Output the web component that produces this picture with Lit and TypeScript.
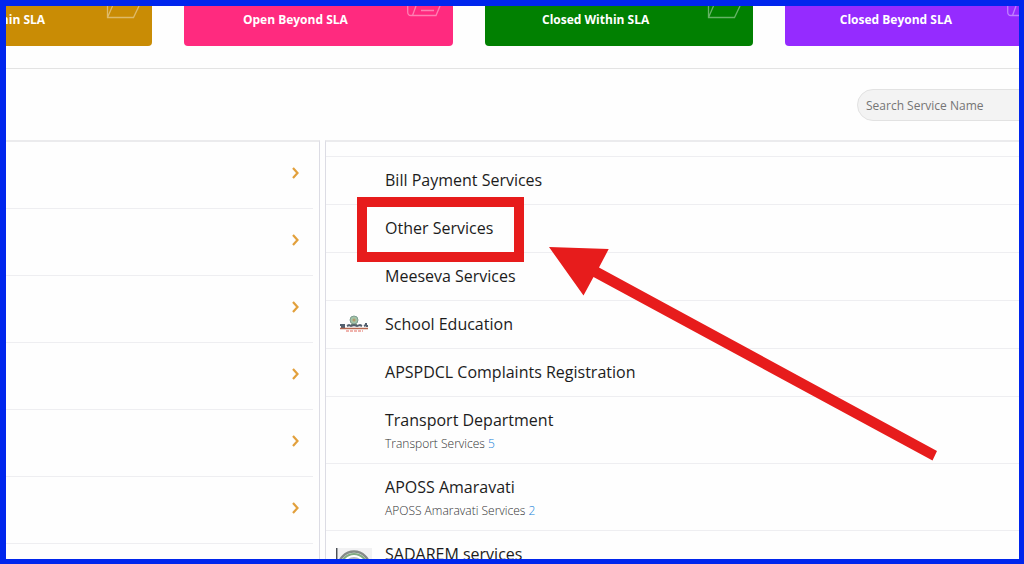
import { LitElement, html, css, svg, nothing } from "lit";
import { customElement } from "lit/decorators.js";
import { classMap } from "lit/directives/class-map.js";

interface Status {
  label: string;
  tone: string;
  icon: "open" | "lined";
}

interface Service {
  title: string;
  detail?: string;
  count?: number;
  logo?: "school" | "seal";
  tall?: boolean;
}

const STATUSES: Status[] = [
  { label: "Open Within SLA", tone: "amber", icon: "open" },
  { label: "Open Beyond SLA", tone: "pink", icon: "lined" },
  { label: "Closed Within SLA", tone: "green", icon: "open" },
  { label: "Closed Beyond SLA", tone: "violet", icon: "lined" },
];

const SERVICES: Service[] = [
  { title: "Bill Payment Services" },
  { title: "Other Services" },
  { title: "Meeseva Services" },
  { title: "School Education", logo: "school" },
  { title: "APSPDCL Complaints Registration" },
  { title: "Transport Department", detail: "Transport Services", count: 5, tall: true },
  { title: "APOSS Amaravati", detail: "APOSS Amaravati Services", count: 2, tall: true },
  { title: "SADAREM services", logo: "seal", tall: true },
];

const DEPARTMENTS = [1, 2, 3, 4, 5, 6, 7];

const folderOpen = svg`<path d="M1.5 0V11.5H27.5L33 0M1.5 11.5L6.5 0" />`;
const folderLined = svg`<path d="M.7 0V6Q.7 9.5 4 9.5H29L33 0M5.500 9.500L9 0M14 4.500H27" />`;

const schoolLogo = html`<svg class="logo" width="36" height="20" viewBox="0 0 36 20" aria-hidden="true">
  <circle cx="18" cy="6" r="4" fill="#a3c3a6" stroke="#7f9e93" />
  <circle cx="18" cy="6" r="1.500" fill="#b59a69" />
  <path d="M15 10h6v2h-6z" fill="#77936f" />
  <path d="M4 11h5M5 13h4M11 12l2-1 2 1 3-1 3 1 3-1 2 1M28 12l2-1M29 10h2M30 12h2" stroke="#53606f" stroke-width="2" fill="none" />
  <path d="M4 14.500H32" stroke="#b5674f" stroke-width="1.500" />
  <path d="M10 17H27" stroke="#f0b3ad" stroke-width="2" stroke-dasharray="3 1" />
</svg>`;

const sealLogo = html`<svg class="logo" width="36" height="36" viewBox="0 0 36 36" aria-hidden="true">
  <rect width="36" height="36" fill="#f1f1f2" />
  <path d="M.7 0V36" stroke="#4b4f55" stroke-width="1.500" />
  <circle cx="18" cy="19" r="15.500" fill="#fff" stroke="#858b88" stroke-width="2.500" />
  <circle cx="18" cy="19" r="13" fill="none" stroke="#82aa83" stroke-width="2" />
  <circle cx="18" cy="19" r="9" fill="#dddde2" stroke="#b5b7c0" stroke-width="2" />
  <circle cx="18" cy="14" r="3" fill="#884f57" />
  <path d="M14 20h8v8h-8z" fill="#727c69" />
</svg>`;

@customElement("app-root")
export class AppRoot extends LitElement {
  static styles = css`
    :host {
      display: block;
      font-family: "Open Sans", "Noto Sans", sans-serif;
      color: #1c1c1c;
    }
    * {
      box-sizing: border-box;
    }
    .frame {
      position: relative;
      height: 100vh;
      overflow: hidden;
      display: flex;
      flex-direction: column;
      border: 5px solid #0026ed;
      border-top-width: 6px;
      border-left-width: 6px;
      background: #fefefe;
    }
    .statuses {
      flex: none;
      display: grid;
      grid-template-columns: repeat(4, 1fr);
      gap: 32px;
      margin: 0 -34px 0 -122px;
      padding-bottom: 22px;
    }
    .status {
      display: flex;
      height: 40px;
      padding: 0 12px 0 0;
      border: 0;
      border-radius: 0 0 4px 4px;
      font: 700 12px/28px "Open Sans", sans-serif;
      color: #fff;
    }
    .amber { background: #c98c05; }
    .pink { background: #ff2a7f; }
    .green { background: #018001; }
    .violet { background: #952bff; }
    .status-label {
      flex: 1;
      text-align: center;
    }
    .folder {
      flex: none;
      fill: none;
      stroke: #fff;
      stroke-opacity: 0.4;
      stroke-width: 1.3;
    }
    .toolbar {
      flex: none;
      display: flex;
      justify-content: flex-end;
      padding: 20px 0 19px;
      border-top: 1px solid #e3e3e3;
    }
    .search {
      width: 200px;
      height: 32px;
      margin-right: -38px;
      padding: 0 8px;
      border: 1px solid #e2e2e2;
      border-radius: 16px;
      background: #f3f3f3;
      font: 12px/20px "Open Sans", sans-serif;
      color: #333;
    }
    .search::placeholder {
      color: #757575;
      opacity: 1;
    }
    .columns {
      flex: none;
      display: flex;
      gap: 5px;
    }
    .panel {
      margin: 0;
      padding: 0;
      list-style: none;
      border-top: 2px solid #ebebed;
    }
    .departments {
      width: 31%;
      padding-right: 6px;
      border-right: 1px solid #dcdce4;
    }
    .department {
      width: 100%;
      height: 67px;
      display: flex;
      align-items: center;
      justify-content: flex-end;
      padding: 0 13px 4px 0;
      border: 0;
      border-bottom: 1px solid #eeeef1;
      background: none;
    }
    .chevron {
      fill: none;
      stroke: #e2a03c;
      stroke-width: 2.2;
    }
    .services {
      flex: 1;
      padding-top: 14px;
      border-left: 1px solid #dcdce4;
    }
    .service {
      display: flex;
      align-items: center;
      height: 48px;
      padding-bottom: 2px;
      border-top: 1px solid #eeeef1;
      color: inherit;
      text-decoration: none;
    }
    .tall {
      height: 67px;
      padding: 4px 0 0;
    }
    .tall .text {
      height: 48px;
    }
    .logo-cell {
      flex: none;
      width: 59px;
      padding-left: 10px;
      display: flex;
    }
    .title {
      display: block;
      font-size: 16px;
      line-height: 24px;
    }
    .detail {
      display: block;
      font-size: 12px;
      font-weight: 300;
      line-height: 24px;
      color: #333;
    }
    .count {
      color: #1580d8;
    }
    .highlight {
      position: absolute;
      left: 351px;
      top: 191px;
      width: 167px;
      height: 65px;
      border: 10px solid #e71c1c;
      pointer-events: none;
    }
    .arrow {
      position: absolute;
      left: 543px;
      top: 241px;
      fill: #e71c1c;
      pointer-events: none;
    }
  `;

  private renderStatus(s: Status) {
    return html`<button class=${classMap({ status: true, [s.tone]: true })}>
      <span class="status-label">${s.label}</span>
      <svg class="folder" width="34" height="14" viewBox="0 0 34 14" aria-hidden="true">
        ${s.icon === "open" ? folderOpen : folderLined}
      </svg>
    </button>`;
  }

  private renderService(s: Service) {
    const logo = s.logo === "school" ? schoolLogo : s.logo === "seal" ? sealLogo : nothing;
    return html`<li>
      <a href="#" class=${classMap({ service: true, tall: !!s.tall })}>
        <span class="logo-cell">${logo}</span>
        <span class="text">
          <span class="title">${s.title}</span>
          ${s.detail
            ? html`<span class="detail">${s.detail} <span class="count">${s.count}</span></span>`
            : nothing}
        </span>
      </a>
    </li>`;
  }

  render() {
    return html`<main class="frame">
      <section class="statuses">${STATUSES.map((s) => this.renderStatus(s))}</section>
      <div class="toolbar">
        <input class="search" type="text" aria-label="Search Service Name" placeholder="Search Service Name" />
      </div>
      <div class="columns">
        <ul class="panel departments">
          ${DEPARTMENTS.map(
            (n) => html`<li>
              <button class="department" aria-label="Department ${n}">
                <svg class="chevron" width="9" height="12" viewBox="0 0 9 12" aria-hidden="true">
                  <path d="M2 1L6.500 6L2 11" />
                </svg>
              </button>
            </li>`
          )}
        </ul>
        <ul class="panel services">
          ${SERVICES.map((s) => this.renderService(s))}
        </ul>
      </div>
      <div class="highlight"></div>
      <svg class="arrow" width="390" height="214" viewBox="0 0 390 214" aria-hidden="true">
        <path d="M0 0L59.700 2L50 20.500L388 204L383.500 213.500L44.500 30L34.500 48.500Z" />
      </svg>
    </main>`;
  }
}
